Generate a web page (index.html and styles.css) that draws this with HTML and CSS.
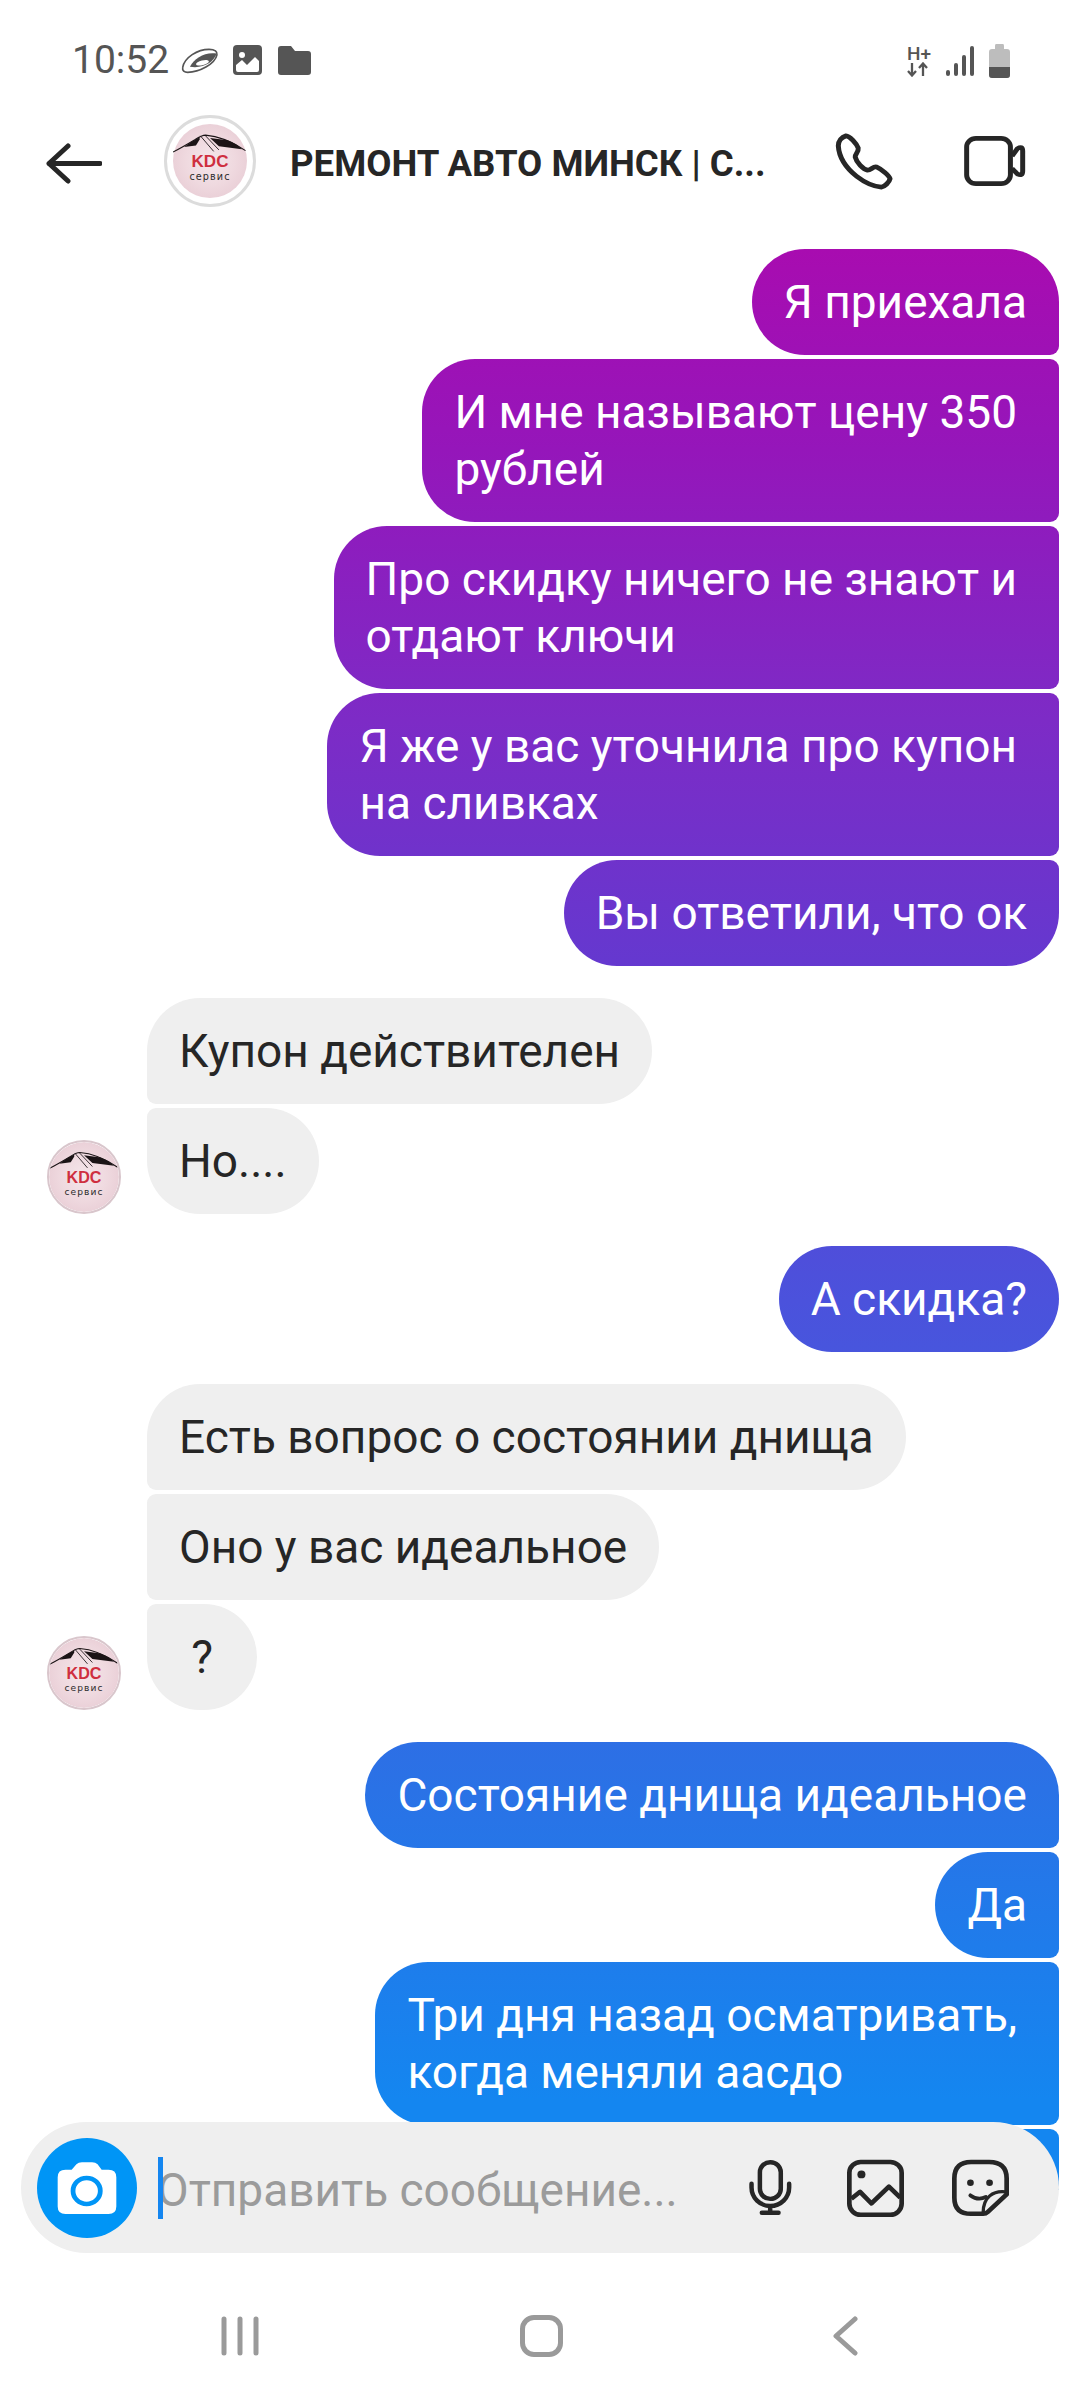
FILE: index.html
```html
<!DOCTYPE html>
<html lang="ru">
<head>
    <meta charset="UTF-8">
    <meta name="viewport" content="width=device-width, initial-scale=1.0">
    <title>Чат</title>
    <link rel="stylesheet" href="styles.css">
</head>
<body>
    <svg class="defs" width="0" height="0">
        <defs>
            <radialGradient id="logoBg" cx="50%" cy="50%" r="55%">
                <stop offset="0" stop-color="#f4e6ea"/>
                <stop offset="0.6" stop-color="#efd9df"/>
                <stop offset="1" stop-color="#e9ced6"/>
            </radialGradient>
        </defs>
        <symbol id="logo" viewBox="0 0 100 100">
            <circle cx="50" cy="50" r="50" fill="url(#logoBg)"/>
            <path d="M0 38 C10 33 20 27 30 21 C36 17 40 15 44 15 C60 16 80 24 98 36" fill="none" stroke="#1b1416" stroke-width="1.500"/>
            <path d="M50 19 L74 22 C82 25 88 29 93 34 L62 30 Z" fill="#1b1416"/>
            <path d="M15 31 C22 26 28 22 36 18 L36 21 L31 29 Z" fill="#1b1416"/>
            <path d="M37 16 L55 37 M44 16 L62 35" stroke="#2a2225" stroke-width="1.300" fill="none"/>
        </symbol>
    </svg>

    <div class="phone">
        <div class="status">
            <div class="status-left">
                <span class="time">10:52</span>
                <svg class="ico-ufo" viewBox="525 138 115 82"><path d="M530 200 C535 170 575 145 610 145 C628 145 636 152 634 162 C628 190 580 215 545 215 C535 215 528 210 530 200 Z" fill="#fff" stroke="#555" stroke-width="5"/><path d="M552 198 C565 172 598 152 633 158 C625 185 590 205 552 198 Z" fill="#555"/><ellipse cx="590" cy="186" rx="20" ry="7" transform="rotate(-14 590 186)" fill="#fff"/></svg>
                <svg class="ico-pic" viewBox="0 0 29 30"><rect width="29" height="30" rx="4" fill="#555"/><circle cx="9" cy="10" r="3" fill="#fff"/><path d="M3 25 V20 L9 15 L14 20 L22 12 L26 16 V25 Q26 27 24 27 H5 Q3 27 3 25 Z" fill="#fff"/></svg>
                <svg class="ico-folder" viewBox="0 0 33 29"><path d="M0 3 Q0 0 3 0 H13 L17 5 H30 Q33 5 33 8 V26 Q33 29 30 29 H3 Q0 29 0 26 Z" fill="#555"/></svg>
            </div>
            <div class="status-right">
                <div class="net">
                    <span class="net-label">H+</span>
                    <svg class="net-arrows" viewBox="0 0 22 15"><path d="M5 1 V13 M1 9 L5 13.500 L9 9 M16 14 V2 M12 6 L16 1.500 L20 6" fill="none" stroke="#555" stroke-width="2.300"/></svg>
                </div>
                <svg class="ico-signal" viewBox="0 0 28 30"><rect x="0" y="24" width="4" height="6" rx="2" fill="#555"/><rect x="8" y="17" width="4" height="13" rx="2" fill="#555"/><rect x="16" y="9" width="4" height="21" rx="2" fill="#555"/><rect x="24" y="0" width="4" height="30" rx="2" fill="#555"/></svg>
                <svg class="ico-batt" viewBox="0 0 21 34"><path d="M7 0 H14 Q15 0 15 2 V5 H18 Q21 5 21 8 V31 Q21 34 18 34 H3 Q0 34 0 31 V8 Q0 5 3 5 H6 V2 Q6 0 7 0 Z" fill="#bdbdbd"/><path d="M0 23 H21 V31 Q21 34 18 34 H3 Q0 34 0 31 Z" fill="#555"/></svg>
            </div>
        </div>

        <header class="topbar">
            <svg class="ico-back" viewBox="0 0 56 41"><path d="M54 20.500 H3 M22 3 L3 20.500 L22 38" fill="none" stroke="#262626" stroke-width="5" stroke-linecap="round" stroke-linejoin="round"/></svg>
            <div class="head-avatar">
                <svg class="head-logo" viewBox="0 0 100 100">
                    <use href="#logo" width="100" height="100"/>
                    <text x="50" y="58" class="logo-kdc" text-anchor="middle">KDC</text>
                    <text x="50" y="75" class="logo-sub" text-anchor="middle">сервис</text>
                </svg>
            </div>
            <div class="title">РЕМОНТ АВТО МИНСК | С...</div>
            <svg class="ico-phone" viewBox="860 395 175 178" preserveAspectRatio="none"><path d="M893 404 C880 408 870 420 870 435 C872 470 895 505 925 530 C950 550 975 562 1000 564 C1010 563 1024 548 1026 538 C1024 528 1000 508 985 501 C975 498 968 512 958 511 C945 508 925 488 921 470 C920 460 932 455 930 442 C925 428 905 405 893 404 Z" fill="none" stroke="#262626" stroke-width="15" stroke-linejoin="round"/></svg>
            <svg class="ico-video" viewBox="1230 400 190 168" preserveAspectRatio="none"><rect x="1241" y="411" width="132" height="146" rx="28" fill="none" stroke="#262626" stroke-width="15"/><path d="M1378 468 L1394 444 Q1410 434 1410 452 V516 Q1410 534 1394 526 L1378 508" fill="none" stroke="#262626" stroke-width="15" stroke-linejoin="round"/></svg>
        </header>

        <main class="thread">
            <div class="group out">
                <div class="msg sent first">Я приехала</div>
                <div class="msg sent mid wrapped">И мне называют цену 350<br>рублей</div>
                <div class="msg sent mid wrapped">Про скидку ничего не знают и<br>отдают ключи</div>
                <div class="msg sent mid wrapped">Я же у вас уточнила про купон<br>на сливках</div>
                <div class="msg sent last">Вы ответили, что ок</div>
            </div>
            <div class="group in">
                <svg class="avatar" viewBox="0 0 100 100">
                    <use href="#logo" width="100" height="100"/>
                    <text x="50" y="58" class="logo-kdc" text-anchor="middle">KDC</text>
                    <text x="50" y="75" class="logo-sub" text-anchor="middle">сервис</text>
                </svg>
                <div class="stack">
                    <div class="msg recv first">Купон действителен</div>
                    <div class="msg recv last">Но....</div>
                </div>
            </div>
            <div class="group out">
                <div class="msg sent">А скидка?</div>
            </div>
            <div class="group in">
                <svg class="avatar" viewBox="0 0 100 100">
                    <use href="#logo" width="100" height="100"/>
                    <text x="50" y="58" class="logo-kdc" text-anchor="middle">KDC</text>
                    <text x="50" y="75" class="logo-sub" text-anchor="middle">сервис</text>
                </svg>
                <div class="stack">
                    <div class="msg recv first">Есть вопрос о состоянии днища</div>
                    <div class="msg recv mid">Оно у вас идеальное</div>
                    <div class="msg recv last short">?</div>
                </div>
            </div>
            <div class="group out">
                <div class="msg sent first">Состояние днища идеальное</div>
                <div class="msg sent mid">Да</div>
                <div class="msg sent mid wrapped">Три дня назад осматривать,<br>когда меняли аасдо</div>
                <div class="msg sent mid wide">&nbsp;</div>
            </div>
        </main>

        <div class="composer">
            <div class="cam">
                <svg class="ico-cam" viewBox="165 228 176 166" preserveAspectRatio="none"><path fill-rule="evenodd" d="M190 255 H208 L222 238 Q228 232 238 232 H268 Q278 232 284 238 L296 255 H316 Q339 255 339 278 V368 Q339 391 316 391 H190 Q167 391 167 368 V278 Q167 255 190 255 Z M252 273 A47 47 0 1 0 252 367 A47 47 0 1 0 252 273 Z M252 287 A33 33 0 1 1 252 353 A33 33 0 1 1 252 287 Z" fill="#fff"/></svg>
            </div>
            <div class="field"><span class="caret"></span><span class="placeholder">Отправить сообщение...</span></div>
            <svg class="ico-mic" viewBox="600 232 140 180" preserveAspectRatio="none"><rect x="637" y="242" width="65" height="116" rx="32" fill="none" stroke="#262626" stroke-width="14"/><path d="M611 310 V322 A58 58 0 0 0 728 322 V310 M669 382 V402 M643 402 H695" fill="none" stroke="#262626" stroke-width="14" stroke-linecap="round"/></svg>
            <svg class="ico-gallery" viewBox="886 232 176 180" preserveAspectRatio="none"><rect x="896" y="241" width="156" height="164" rx="34" fill="none" stroke="#262626" stroke-width="14"/><circle cx="932" cy="280" r="12" fill="#262626"/><path d="M902 355 L928 334 L962 370 L1014 318 L1048 352" fill="none" stroke="#262626" stroke-width="14" stroke-linejoin="round"/></svg>
            <svg class="ico-sticker" viewBox="1192 232 176 180" preserveAspectRatio="none"><path d="M1288 402 H1252 Q1202 402 1202 352 V292 Q1202 241 1252 241 H1306 Q1358 241 1358 292 V342 L1302 396 Q1296 402 1288 402 Z" fill="none" stroke="#262626" stroke-width="14" stroke-linejoin="round"/><path d="M1354 334 C1318 330 1288 350 1288 398" fill="none" stroke="#262626" stroke-width="10"/><circle cx="1250" cy="306" r="10" fill="#262626"/><circle cx="1307" cy="306" r="10" fill="#262626"/><path d="M1250 345 Q1272 362 1296 350" fill="none" stroke="#262626" stroke-width="12" stroke-linecap="round"/></svg>
        </div>

        <nav class="sysnav">
            <svg class="nav-recent" viewBox="0 0 38 40"><path d="M3 3 V37 M19 3 V37 M35 3 V37" fill="none" stroke="#9a9a9a" stroke-width="5" stroke-linecap="round"/></svg>
            <div class="nav-home"></div>
            <svg class="nav-back" viewBox="0 0 25 40"><path d="M22 3 L3 20 L22 37" fill="none" stroke="#9a9a9a" stroke-width="5" stroke-linecap="round" stroke-linejoin="round"/></svg>
        </nav>
    </div>
</body>
</html>
```

FILE: styles.css
```css
* {
    box-sizing: border-box;
}
body {
    margin: 0;
    background: #fff;
    font-family: Roboto, "Liberation Sans", sans-serif;
}
.defs {
    position: absolute;
}
.phone {
    position: relative;
    width: 1080px;
    height: 2400px;
    display: flex;
    flex-direction: column;
    overflow: hidden;
    background: #fff;
}

/* status bar */
.status {
    height: 84px;
    padding: 32px 70px 0 72px;
    display: flex;
    justify-content: space-between;
    align-items: flex-start;
    flex-shrink: 0;
}
.status-left {
    display: flex;
    align-items: center;
}
.time {
    font-size: 39px;
    line-height: 56px;
    color: #555;
}
.ico-ufo {
    width: 38px;
    height: 27px;
    margin-left: 12px;
}
.ico-pic {
    width: 29px;
    height: 30px;
    margin-left: 14px;
}
.ico-folder {
    width: 33px;
    height: 29px;
    margin-left: 16px;
}
.status-right {
    display: flex;
    align-items: center;
    padding-top: 12px;
}
.net {
    width: 22px;
    display: flex;
    flex-direction: column;
}
.net-label {
    font-size: 19px;
    line-height: 17px;
    font-weight: 500;
    color: #555;
}
.net-arrows {
    width: 22px;
    height: 15px;
}
.ico-signal {
    width: 28px;
    height: 30px;
    margin-left: 17px;
}
.ico-batt {
    width: 21px;
    height: 34px;
    margin-left: 15px;
}

/* top bar */
.topbar {
    height: 165px;
    padding: 0 53px 0 46px;
    display: flex;
    align-items: flex-start;
    flex-shrink: 0;
}
.ico-back {
    width: 56px;
    height: 41px;
    margin-top: 59px;
}
.head-avatar {
    width: 92px;
    height: 92px;
    margin: 31px 0 0 62px;
    padding: 6px;
    border: 3px solid #dcdcdc;
    border-radius: 50%;
    flex-shrink: 0;
}
.head-logo {
    display: block;
    width: 74px;
    height: 74px;
}
.title {
    margin: 58px 0 0 34px;
    width: 473px;
    font-size: 36.600px;
    line-height: 44px;
    font-weight: 700;
    color: #262626;
    white-space: nowrap;
}
.ico-phone {
    width: 58px;
    height: 57px;
    margin: 49px 0 0 72px;
}
.ico-video {
    width: 63px;
    height: 52px;
    margin: 51px 0 0 70px;
}

/* messages */
.thread {
    flex: 1;
    overflow: hidden;
    padding: 0 21px 0 47px;
    display: flex;
    flex-direction: column;
    gap: 32px;
    margin-bottom: 210px;
}
.group {
    display: flex;
    flex-shrink: 0;
}
.group.out {
    flex-direction: column;
    align-items: flex-end;
    gap: 4px;
}
.group.in {
    align-items: flex-end;
    gap: 26px;
}
.stack {
    display: flex;
    flex-direction: column;
    align-items: flex-start;
    gap: 4px;
}
.avatar {
    display: block;
    width: 74px;
    height: 74px;
    border-radius: 50%;
    border: 2px solid #d9c6cc;
}
.msg {
    padding: 24.500px 32px;
    font-size: 46px;
    line-height: 57px;
    white-space: nowrap;
    border-radius: 53px;
}
.msg.wrapped {
    padding-right: 42px;
}
.msg.short {
    min-width: 110px;
    text-align: center;
}
.msg.sent {
    color: #fff;
    background: linear-gradient(180deg, #a80cb0 249px, #9516ba 450px, #7d2bc6 720px, #6538cf 960px, #4b52dc 1300px, #2a72e6 1790px, #1486f0 2100px) fixed;
}
.msg.recv {
    color: #262626;
    background: #efefef;
}
.sent.first {
    border-bottom-right-radius: 9px;
}
.sent.mid {
    border-top-right-radius: 9px;
    border-bottom-right-radius: 9px;
}
.sent.last {
    border-top-right-radius: 9px;
}
.recv.first {
    border-bottom-left-radius: 9px;
}
.recv.mid {
    border-top-left-radius: 9px;
    border-bottom-left-radius: 9px;
}
.recv.last {
    border-top-left-radius: 9px;
}
.msg.wide {
    width: 300px;
}
.logo-kdc {
    font-family: "Liberation Sans", sans-serif;
    font-size: 23px;
    font-weight: 700;
    fill: #cf2f3f;
}
.logo-sub {
    font-family: "DejaVu Sans", sans-serif;
    font-size: 13px;
    letter-spacing: 1.500px;
    fill: #2a2a2a;
}

/* input bar, sits over the end of the thread */
.composer {
    position: absolute;
    left: 21px;
    top: 2122px;
    width: 1038px;
    height: 131px;
    padding: 0 48px 0 16px;
    display: flex;
    align-items: center;
    background: #efefef;
    border-radius: 66px;
}
.cam {
    width: 100px;
    height: 100px;
    border-radius: 50%;
    background: #0095f6;
    display: flex;
    align-items: center;
    justify-content: center;
    flex-shrink: 0;
}
.ico-cam {
    width: 60px;
    height: 54px;
}
.field {
    width: 590px;
    position: relative;
    padding: 4px 0 0 20px;
    display: flex;
    align-items: center;
    height: 62px;
}
.caret {
    position: absolute;
    left: 21px;
    top: 0;
    width: 5px;
    height: 62px;
    background: #1486f0;
}
.placeholder {
    font-size: 46px;
    color: #9b9b9b;
    white-space: nowrap;
}
.ico-mic {
    width: 45px;
    height: 57px;
    margin-left: 21px;
    flex-shrink: 0;
}
.ico-gallery {
    width: 59px;
    height: 58px;
    margin-left: 53px;
    flex-shrink: 0;
}
.ico-sticker {
    width: 59px;
    height: 58px;
    margin-left: 46px;
    flex-shrink: 0;
}

/* system nav */
.sysnav {
    position: absolute;
    left: 0;
    right: 0;
    top: 2315px;
    display: flex;
    align-items: center;
    padding-left: 221px;
}
.nav-recent {
    width: 38px;
    height: 40px;
}
.nav-home {
    width: 43px;
    height: 42px;
    margin-left: 261px;
    border: 5px solid #9a9a9a;
    border-radius: 14px;
}
.nav-back {
    width: 25px;
    height: 40px;
    margin-left: 270px;
}
```
